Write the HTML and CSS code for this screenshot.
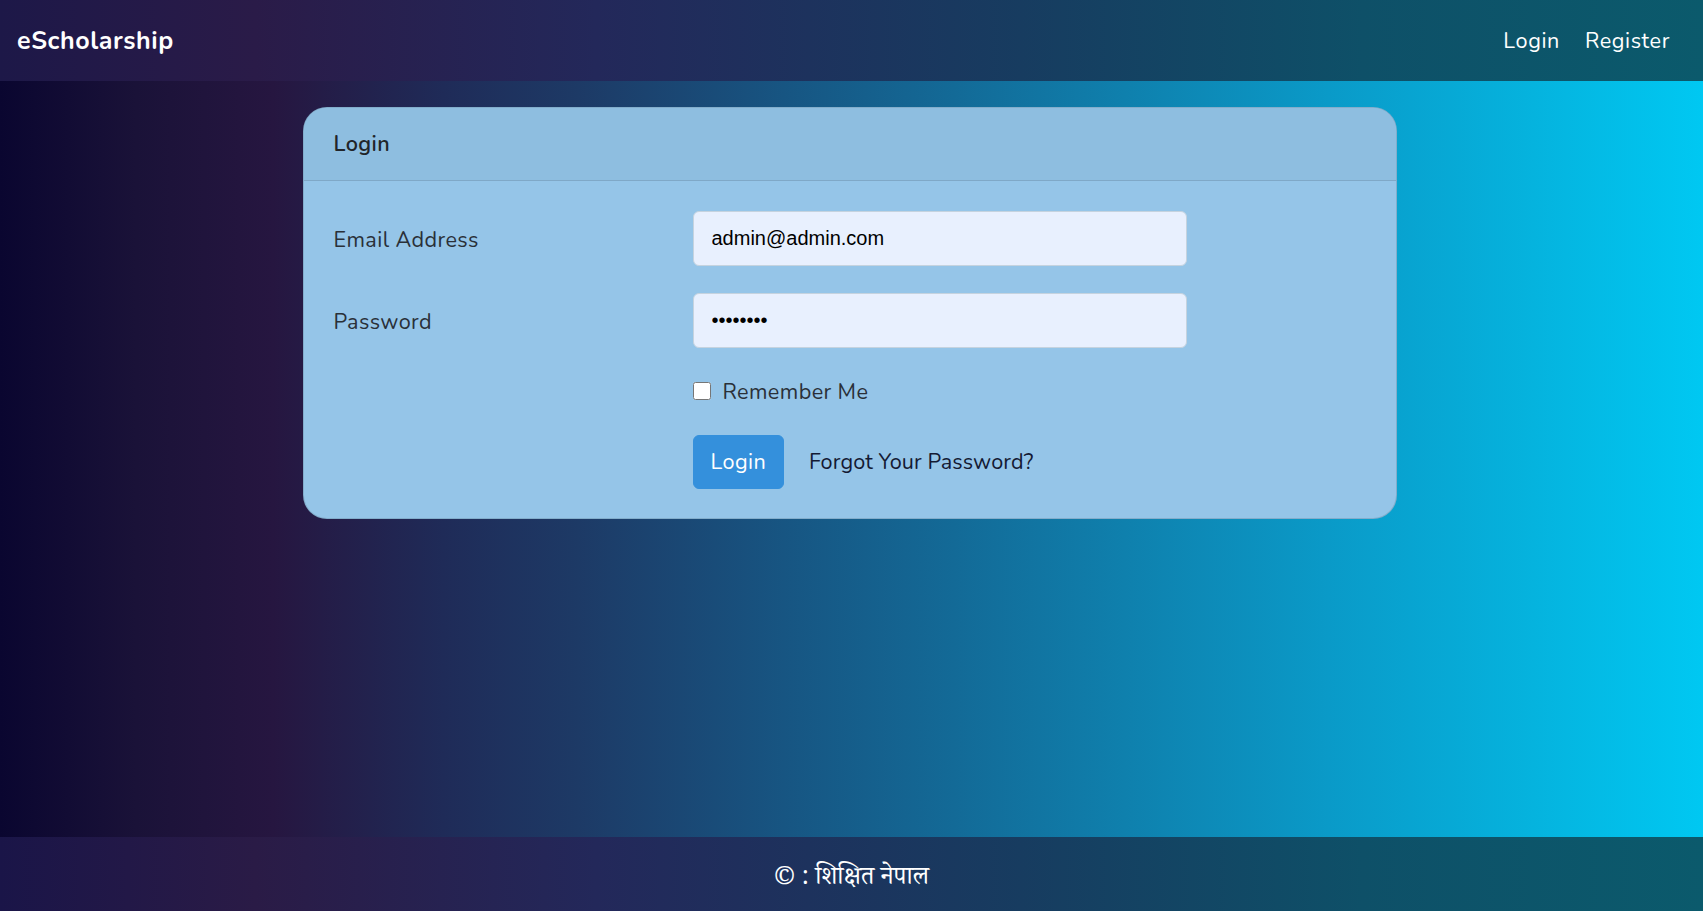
FILE: index.html
```html
<!DOCTYPE html>
<html lang="en">
<head>
<meta charset="utf-8">
<title>eScholarship</title>
<link rel="stylesheet" href="styles.css">
</head>
<body>
<div class="page">
  <nav class="navbar">
    <a class="brand" href="#">eScholarship</a>
    <div class="nav-links">
      <a class="nav-link" href="#">Login</a>
      <a class="nav-link" href="#">Register</a>
    </div>
  </nav>
  <main class="main">
    <div class="card">
      <div class="card-header">Login</div>
      <div class="card-body">
        <form class="form">
          <div class="form-row">
            <label class="form-label" for="email">Email Address</label>
            <div class="form-field"><input class="form-input" id="email" type="email" value="admin@admin.com"></div>
          </div>
          <div class="form-row">
            <label class="form-label" for="password">Password</label>
            <div class="form-field"><input class="form-input" id="password" type="password" value="password"></div>
          </div>
          <div class="form-row check-row">
            <div class="form-label"></div>
            <div class="form-field check">
              <input class="checkbox" type="checkbox" id="remember">
              <label class="check-label" for="remember">Remember Me</label>
            </div>
          </div>
          <div class="form-row last">
            <div class="form-label"></div>
            <div class="form-field actions">
              <button class="btn" type="button">Login</button>
              <a class="forgot" href="#">Forgot Your Password?</a>
            </div>
          </div>
        </form>
      </div>
    </div>
  </main>
  <footer class="footer">© : शिक्षित नेपाल</footer>
</div>
</body>
</html>
```
FILE: styles.css
```css
* { box-sizing: border-box; }
html, body { margin: 0; padding: 0; height: 100%; }
body {
  font-family: "Nunito", "Lato", "Noto Sans", sans-serif;
  color: #212529;
  font-size: 21.6px;
  letter-spacing: 0.4px;
}
.page {
  min-height: 100vh;
  display: flex;
  flex-direction: column;
}
.navbar {
  height: 81px;
  flex: 0 0 81px;
  display: flex;
  align-items: center;
  justify-content: space-between;
  padding: 1px 33px 0 17px;
  background: linear-gradient(to right, #1d1848 0%, #2a1b48 15%, #23285a 35%, #173c60 60%, #0e5068 80%, #0b5a6c 100%);
}
.brand {
  color: #fff;
  text-decoration: none;
  font-weight: 700;
  font-size: 25px;
  letter-spacing: 0.6px;
}
.nav-links { display: flex; gap: 25px; }
.nav-link {
  color: #fff;
  text-decoration: none;
  font-size: 21.6px;
  letter-spacing: 0.6px;
}
.main {
  flex: 1 1 auto;
  padding: 26px 4px 0 0;
  background: linear-gradient(to right, #0a0630 0%, #1a1238 8%, #261640 16%, #1f2b58 26%, #1d3a66 34%, #175582 46%, #136a97 56%, #0f80ad 66%, #0a9ac8 78%, #05b3de 90%, #00c8f2 100%);
}
.card {
  width: 1094px;
  margin: 0 auto;
  border: 1px solid rgba(0, 0, 0, 0.12);
  border-radius: 24px;
  background: #95c5e8;
  overflow: hidden;
}
.card-header {
  height: 73px;
  display: flex;
  align-items: center;
  padding: 0 30px;
  background: #8ebee0;
  border-bottom: 1px solid #7fa8c7;
  font-weight: 600;
  font-size: 21.6px;
  color: #212529;
}
.card-body { padding: 30px 30px 29px; }
.form-row {
  display: flex;
  align-items: center;
  margin-bottom: 27px;
}
.form-row.check-row { margin-bottom: 28px; }
.form-row.last { margin-bottom: 0; }
.form-label {
  width: 359px;
  flex: 0 0 359px;
  color: #2a3038;
  padding-top: 2px;
}
.form-field { width: 494px; }
.form-input {
  display: block;
  width: 494px;
  height: 55px;
  padding: 0 18px;
  border: 1px solid #c5d3df;
  border-radius: 6px;
  background: #e8f0fe;
  font-family: "Liberation Sans", Arial, sans-serif;
  font-size: 20px;
  letter-spacing: 0;
  color: #000;
  outline: none;
}
.check {
  display: flex;
  align-items: center;
  height: 32px;
}
.checkbox {
  width: 18px;
  height: 18px;
  margin: 0 12px 0 0;
}
.check-label { color: #2a3038; padding-top: 2px; }
.actions {
  display: flex;
  align-items: center;
}
.btn {
  height: 54px;
  padding: 0 17px;
  background: #3490dc;
  border: 1px solid #3490dc;
  border-radius: 6px;
  color: #fff;
  font-family: inherit;
  font-size: 21.6px;
  letter-spacing: 0.4px;
}
.forgot {
  margin-left: 25px;
  color: #141a33;
  text-decoration: none;
  letter-spacing: 0.1px;
}
.footer {
  height: 74px;
  flex: 0 0 74px;
  display: flex;
  align-items: center;
  justify-content: center;
  padding-top: 13px;
  color: #fff;
  font-family: "Noto Serif Devanagari", "Noto Sans Devanagari", "Lohit Devanagari", "FreeSerif", "Nunito", "Lato", serif;
  font-size: 25px;
  letter-spacing: 0;
  background: linear-gradient(to right, #1a1548 0%, #2a1b46 15%, #23285a 35%, #173c60 60%, #0e5068 80%, #0b5a6c 100%);
}
```
